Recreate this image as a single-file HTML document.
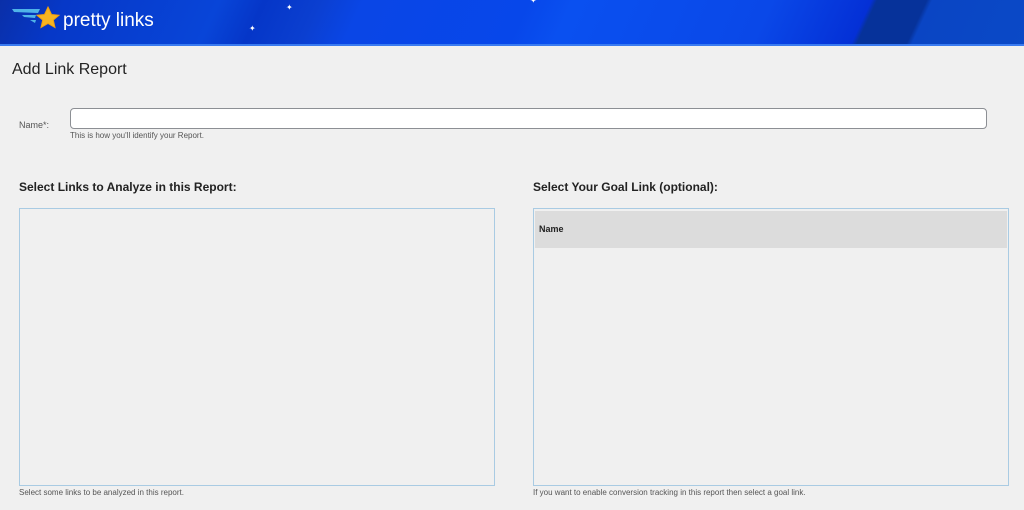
<!DOCTYPE html>
<html><head><meta charset="utf-8"><style>
body{margin:0;width:1024px;height:510px;background:#f0f0f0;font-family:"Liberation Sans",Arial,sans-serif;position:relative;overflow:hidden;color:#333}
.hdr{position:absolute;left:0;top:0;width:1024px;height:44px;border-bottom:2px solid #3a7bf0;
background:linear-gradient(115deg,#0a2fa8 0px,#0638c8 60px,#0845d8 200px,#0536c8 240px,#0b3fd0 290px,#0a46e6 330px,#0747ea 480px,#0a50f0 520px,#0a48e8 700px,#0430d6 790px,#06329a 795px,#06329a 840px,#0a45c4 845px,#0b4cc8 1024px);overflow:hidden}
.a{position:absolute;font-size:12px;font-weight:bold;color:#222}
.s{position:absolute;font-size:8px;color:#555}
.box{position:absolute;top:208px;width:474px;height:276px;border:1px solid #a9cbe3;background:#f0f0f0}
</style></head><body>
<div class="hdr">
<svg width="180" height="44" style="position:absolute;left:0;top:0">
<path d="M12 9 L40 9 L38 13 L14 12Z" fill="#4fb3e8"/>
<path d="M22 15 L36 15 L35 18 L24 17Z" fill="#4fb3e8"/>
<path d="M30 20 L36 20 L35 23Z" fill="#4fb3e8"/>
<path d="M48 7 L51.5 14.5 L59 15.2 L53.3 20 L55 27.5 L48 23.5 L41 27.5 L42.7 20 L37 15.2 L44.5 14.5Z" fill="#f7b521" stroke="#f2a00f" stroke-width="1"/>
<text x="63" y="26" fill="#fff" font-family="Liberation Sans,sans-serif" font-size="19">pretty links</text>
</svg>
<span style="position:absolute;left:286px;top:3px;color:#fff;font-size:8px">✦</span>
<span style="position:absolute;left:249px;top:24px;color:#fff;font-size:8px">✦</span>
<span style="position:absolute;left:530px;top:-4px;color:#fff;font-size:8px">✦</span>
</div>
<div style="position:absolute;left:12px;top:61px;font-size:16px;color:#222">Add Link Report</div>
<div class="s" style="left:19px;top:120px;font-size:9px">Name*:</div>
<div style="position:absolute;left:70px;top:108px;width:915px;height:19px;border:1px solid #8c8f94;border-radius:4px;background:#fff"></div>
<div class="s" style="left:70px;top:131px">This is how you'll identify your Report.</div>
<div class="a" style="left:19px;top:180px">Select Links to Analyze in this Report:</div>
<div class="a" style="left:533px;top:180px">Select Your Goal Link (optional):</div>
<div class="box" style="left:19px"></div>
<div class="box" style="left:533px"><div style="margin:2px 1px 0 1px;height:37px;background:#dcdcdc;font-size:9px;font-weight:bold;color:#222;line-height:37px;padding-left:4px">Name</div></div>
<div class="s" style="left:19px;top:488px">Select some links to be analyzed in this report.</div>
<div class="s" style="left:533px;top:488px">If you want to enable conversion tracking in this report then select a goal link.</div>
</body></html>
